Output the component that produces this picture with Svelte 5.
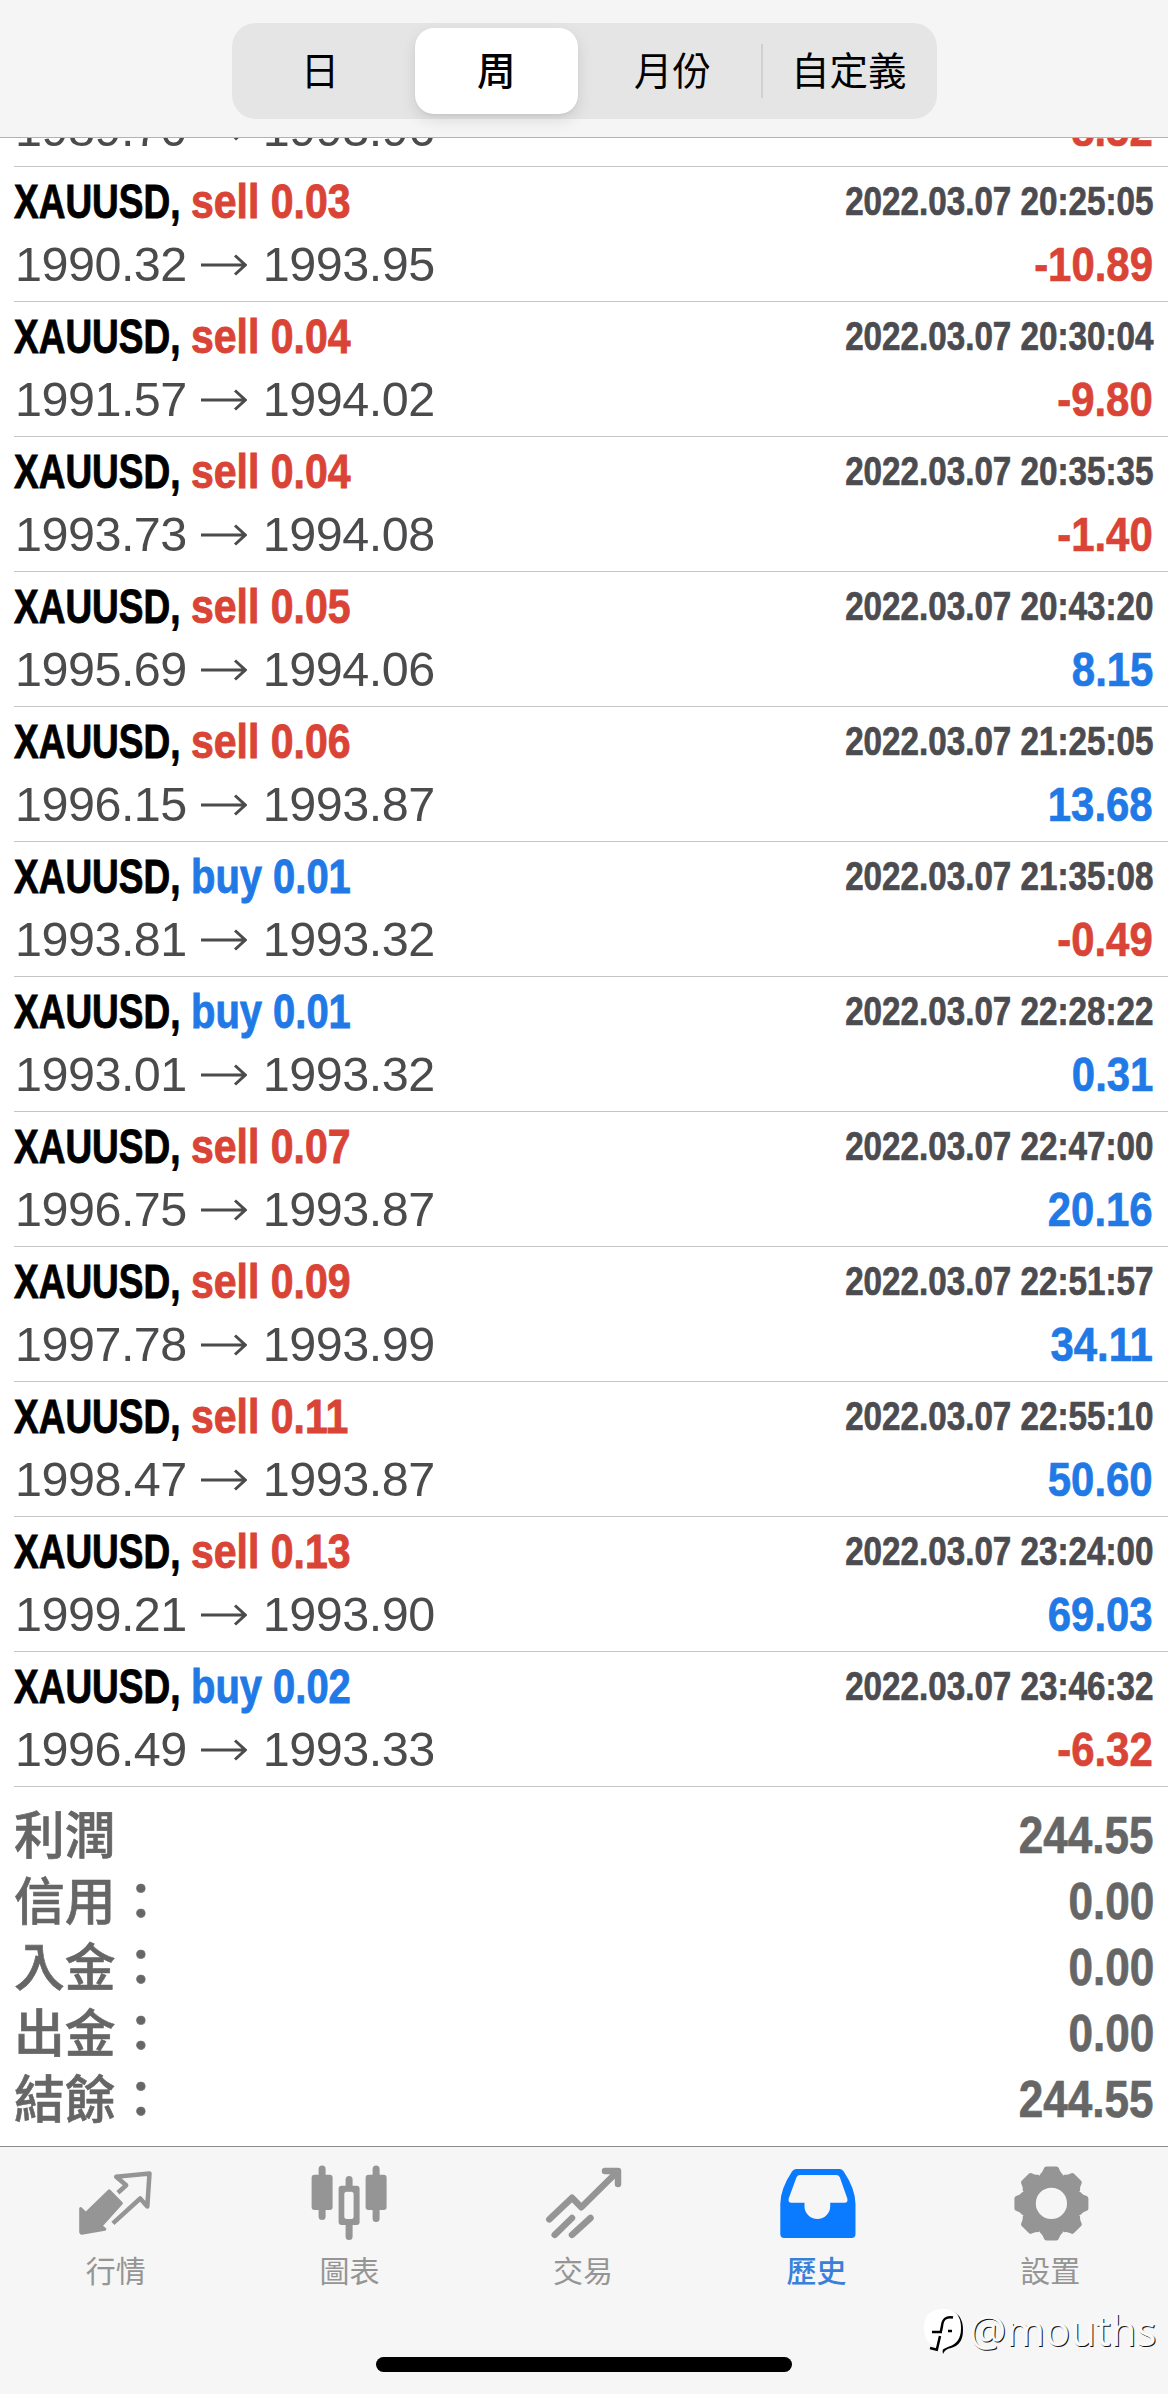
<script lang="ts">
  const periods = ['日', '周', '月份', '自定義'];
  let period = $state('周');

  // the first deal is scrolled under the header, only its price line is left
  const deals = [
    { open: '1989.70', close: '1993.96', profit: '-8.52' },
    { type: 'sell', lots: '0.03', open: '1990.32', close: '1993.95', time: '2022.03.07 20:25:05', profit: '-10.89' },
    { type: 'sell', lots: '0.04', open: '1991.57', close: '1994.02', time: '2022.03.07 20:30:04', profit: '-9.80' },
    { type: 'sell', lots: '0.04', open: '1993.73', close: '1994.08', time: '2022.03.07 20:35:35', profit: '-1.40' },
    { type: 'sell', lots: '0.05', open: '1995.69', close: '1994.06', time: '2022.03.07 20:43:20', profit: '8.15' },
    { type: 'sell', lots: '0.06', open: '1996.15', close: '1993.87', time: '2022.03.07 21:25:05', profit: '13.68' },
    { type: 'buy', lots: '0.01', open: '1993.81', close: '1993.32', time: '2022.03.07 21:35:08', profit: '-0.49' },
    { type: 'buy', lots: '0.01', open: '1993.01', close: '1993.32', time: '2022.03.07 22:28:22', profit: '0.31' },
    { type: 'sell', lots: '0.07', open: '1996.75', close: '1993.87', time: '2022.03.07 22:47:00', profit: '20.16' },
    { type: 'sell', lots: '0.09', open: '1997.78', close: '1993.99', time: '2022.03.07 22:51:57', profit: '34.11' },
    { type: 'sell', lots: '0.11', open: '1998.47', close: '1993.87', time: '2022.03.07 22:55:10', profit: '50.60' },
    { type: 'sell', lots: '0.13', open: '1999.21', close: '1993.90', time: '2022.03.07 23:24:00', profit: '69.03' },
    { type: 'buy', lots: '0.02', open: '1996.49', close: '1993.33', time: '2022.03.07 23:46:32', profit: '-6.32' },
  ];

  const totals = [
    { label: '利潤', value: '244.55' },
    { label: '信用：', value: '0.00' },
    { label: '入金：', value: '0.00' },
    { label: '出金：', value: '0.00' },
    { label: '結餘：', value: '244.55' },
  ];

  const tabs = [
    { id: 'quotes', label: '行情' },
    { id: 'chart', label: '圖表' },
    { id: 'trade', label: '交易' },
    { id: 'history', label: '歷史' },
    { id: 'settings', label: '設置' },
  ];
  let tab = $state('history');
</script>

<div class="app">
  <header>
    <div class="segments">
      {#each periods as p, i}
        <button class="segment" class:active={p == period} class:divided={i == 3} onclick={() => (period = p)}>{p}</button>
      {/each}
    </div>
  </header>

  <main>
    {#each deals as deal}
      <div class="deal">
        {#if deal.time}
          <div class="line">
            <div class="name"><span class="symbol">XAUUSD,</span><span class={deal.type}>{deal.type} {deal.lots}</span></div>
            <div class="time">{deal.time}</div>
          </div>
        {/if}
        <div class="line">
          <div class="prices">
            <span>{deal.open}</span>
            <svg class="arrow" viewBox="0 0 46 22"><path d="M0 11H44M34 1.5L44.3 11L34 20.5" /></svg>
            <span>{deal.close}</span>
          </div>
          <div class="profit" class:loss={deal.profit.startsWith('-')}>{deal.profit}</div>
        </div>
      </div>
    {/each}
    <div class="totals">
      {#each totals as total}
        <div class="total">
          <span class="label">{total.label}</span>
          <span class="value">{total.value}</span>
        </div>
      {/each}
    </div>
  </main>

  <footer>
    <nav>
      {#each tabs as t}
        <button class="tab" class:current={t.id == tab} onclick={() => (tab = t.id)}>
          <svg class="icon" viewBox="0 0 76 76">
            {#if t.id == 'quotes'}
              <path class="fill round" d="M30.2 24.8L42.4 37.3L21.9 60L25.8 63.2L2.6 67.2L1.7 66.2V42.5L6.8 47.5Z" />
              <path class="stroke thin" d="M38.9 26.7L47.2 19.3L37.2 10.7L70.5 7.5L68.3 40.5L61.2 32.5L33.9 57.3" />
            {:else if t.id == 'chart'}
              <path class="stroke wick" d="M10.1 3.1V50.5M64.1 3.1V52.5M37.1 13.5V22M37.1 57V70.5" />
              <rect class="fill" x="-.4" y="8.7" width="21" height="35.3" rx="3" />
              <rect class="fill" x="53.6" y="8.7" width="21" height="35.3" rx="3" />
              <path class="fill" fill-rule="evenodd" d="M29.6 19.7h15q3 0 3 3v33.3q0 3-3 3h-15q-3 0-3-3v-33.3q0-3 3-3ZM34.8 25.7q-2.5 0-2.5 2.5v22.3q0 2.5 2.5 2.5h4.3q2.5 0 2.5-2.5v-22.3q0-2.5-2.5-2.5Z" />
            {:else if t.id == 'trade'}
              <path class="stroke" d="M3.3 53.3L26 31.8L35.3 41.3L71.5 5.5M59 5H72V18M8.7 68.8L26 52M26 68.8L44.5 52" />
            {:else if t.id == 'history'}
              <path class="fill" fill-rule="evenodd" d="M16 3H60Q62.3 3 63.7 5.5Q75.5 23 75.5 38V68Q75.5 72 71.5 72H4.3Q.3 72 .3 68V38Q.3 23 12 5.5Q13.5 3 16 3ZM20 9Q17.5 9 16.5 11.3L8.7 32.5Q7.8 36.7 11.5 36.7H24.5V40.2A12.8 12.8 0 0 0 50.2 40.2V36.7H64.5Q68.3 36.7 67.3 32.5L59.8 11.3Q58.8 9 56 9Z" />
            {:else}
              <circle class="ring" cx="38.4" cy="37.4" r="22.6" />
              {#each [0, 45, 90, 135, 180, 225, 270, 315] as angle}
                <path class="fill tooth" transform={`rotate(${angle} 38.4 37.4)`} d="M29.4 9.3Q31.6 8 33.4 2.9H43.4Q45.2 8 47.4 9.3L46.5 16H30.3Z" />
              {/each}
            {/if}
          </svg>
          <span>{t.label}</span>
        </button>
      {/each}
    </nav>
    <div class="home"></div>
    <div class="watermark">
      <svg viewBox="0 0 44 50">
        <path class="bubble-shadow" d="M23 4Q41 5 41 24Q41 39 29 42Q23 43 21 48Q19 42 26 38L34 8Z" />
        <path class="bubble" d="M21 3Q39 3 39 22Q39 37 27 40.5Q22 42 18.5 46Q18.5 43 16 41.5Q2 38 2 22Q2 3 21 3Z" />
        <path class="mark" d="M31 11.5Q21 9.500 20 20L19 25M18 30L15 43M10 26H20M26 25H30M8 42L16 44" />
      </svg>
      <span>@mouths</span>
    </div>
  </footer>
</div>

<style>
  :global(body) {
    background: #fff;
  }

  .app {
    display: flex;
    flex-direction: column;
    width: 1168px;
    height: 2394px;
    overflow: hidden;
    font-family: 'Liberation Sans', 'Noto Sans CJK TC', sans-serif;
  }

  button {
    margin: 0;
    padding: 0;
    border: 0;
    background: none;
    font-family: inherit;
  }

  header {
    box-sizing: border-box;
    flex: none;
    height: 138px;
    padding-top: 23px;
    background: #f5f5f5;
    border-bottom: 1px solid #b2b2b4;
  }
  .segments {
    box-sizing: border-box;
    display: grid;
    grid-template-columns: repeat(4, 1fr);
    width: 705px;
    height: 96px;
    margin-left: 232px;
    padding: 5px 0;
    background: #e5e5e6;
    border-radius: 24px;
  }
  .segment {
    position: relative;
    padding-bottom: 5px;
    font-family: 'Noto Sans CJK TC', sans-serif;
    font-size: 38.5px;
    line-height: 81px;
    color: #000;
  }
  .segment.active {
    margin: 0 7px;
    font-weight: 500;
    background: #fff;
    border-radius: 19px;
    box-shadow: 0 6px 16px #0000001c, 0 2px 3px #0000000a;
  }
  .divided::before {
    content: '';
    position: absolute;
    left: 0;
    top: 16px;
    width: 2px;
    height: 54px;
    background: #d0d0d3;
  }

  main {
    flex: 1;
    min-height: 0;
    display: flex;
    flex-direction: column;
    justify-content: flex-end;
    overflow: hidden;
    background: #fff;
  }
  .deal {
    flex: none;
    margin-left: 14px;
    padding: 3px 15px 5px 0;
    border-bottom: 1px solid #c4c5c6;
  }
  .line {
    display: flex;
    justify-content: space-between;
    height: 63px;
    line-height: 63px;
    white-space: nowrap;
  }
  .name {
    display: flex;
    font-size: 49px;
    font-weight: 700;
    -webkit-text-stroke: .9px currentColor;
  }
  /* no condensed face around, so the bold one is squeezed */
  .symbol {
    width: 177px;
    color: #000;
    transform: scaleX(.755);
    transform-origin: left;
  }
  .sell {
    color: #d94436;
    transform: scaleX(.837);
    transform-origin: left;
  }
  .buy {
    color: #2179e6;
    transform: scaleX(.815);
    transform-origin: left;
  }
  .time, .profit, .value {
    font-weight: 700;
    transform: scaleX(.855);
    transform-origin: right;
    -webkit-text-stroke: .7px currentColor;
  }
  .time {
    color: #4b4b50;
    font-size: 40px;
    transform: scaleX(.83);
  }
  .prices {
    display: flex;
    align-items: center;
    padding-left: 1px;
    color: #4b4b4d;
    font-size: 48.5px;
    letter-spacing: -.5px;
  }
  .arrow {
    width: 46px;
    height: 22px;
    margin: 0 16px 0 14px;
    fill: none;
    stroke: #4b4b4d;
    stroke-width: 3;
  }
  .profit {
    color: #2179e6;
    font-size: 49px;
  }
  .profit.loss {
    color: #d94436;
  }

  .totals {
    box-sizing: border-box;
    flex: none;
    height: 359px;
    padding: 15px 14px 0 14px;
    color: #666;
  }
  .total {
    display: flex;
    justify-content: space-between;
    height: 66px;
    font-size: 51.5px;
    line-height: 66px;
  }
  .label {
    margin-top: -3px;
    font-family: 'Noto Sans CJK TC', sans-serif;
    font-size: 50.8px;
    font-weight: 500;
    -webkit-text-stroke: .6px currentColor;
  }

  footer {
    box-sizing: border-box;
    position: relative;
    flex: none;
    height: 248px;
    background: #f6f6f6;
    border-top: 1px solid #8b8b8b;
  }
  nav {
    display: grid;
    grid-template-columns: repeat(5, 1fr);
    height: 210px;
  }
  .tab {
    display: flex;
    flex-direction: column;
    align-items: center;
    padding-top: 19px;
    color: #959595;
    font-family: 'Noto Sans CJK TC', sans-serif;
    font-size: 30px;
    line-height: 40px;
  }
  .tab span {
    margin: 7px 2px 0 0;
  }
  .tab.current {
    color: #0a7aff;
  }
  .current span {
    font-weight: 500;
    color: #3880da;
  }
  .icon {
    width: 76px;
    height: 76px;
    overflow: visible;
  }
  .fill {
    fill: currentColor;
  }
  .round {
    stroke: currentColor;
    stroke-width: 3;
    stroke-linejoin: round;
  }
  .stroke {
    fill: none;
    stroke: currentColor;
    stroke-width: 6.5;
    stroke-linecap: round;
    stroke-linejoin: round;
  }
  .stroke.thin {
    stroke-width: 4.5;
    stroke-linecap: butt;
  }
  .stroke.wick {
    stroke-width: 7;
  }
  .ring {
    fill: none;
    stroke: currentColor;
    stroke-width: 14;
  }
  .tooth {
    stroke: currentColor;
    stroke-width: 5;
    stroke-linejoin: round;
  }

  .home {
    width: 416px;
    height: 15px;
    margin-left: 376px;
    border-radius: 8px;
    background: #000;
  }
  .watermark {
    position: absolute;
    left: 922px;
    top: 159px;
    display: flex;
    align-items: center;
    height: 50px;
  }
  .watermark svg {
    width: 44px;
    height: 50px;
  }
  .watermark span {
    margin: -2px 0 0 3px;
    color: #f9f9f9;
    font-family: 'Noto Sans', sans-serif;
    font-size: 41.5px;
    line-height: 50px;
    text-shadow: 1px 1px 0 #111;
  }
  .bubble {
    fill: #fff;
  }
  .bubble-shadow {
    fill: #000;
  }
  .mark {
    fill: none;
    stroke: #000;
    stroke-width: 2.5;
  }
</style>
